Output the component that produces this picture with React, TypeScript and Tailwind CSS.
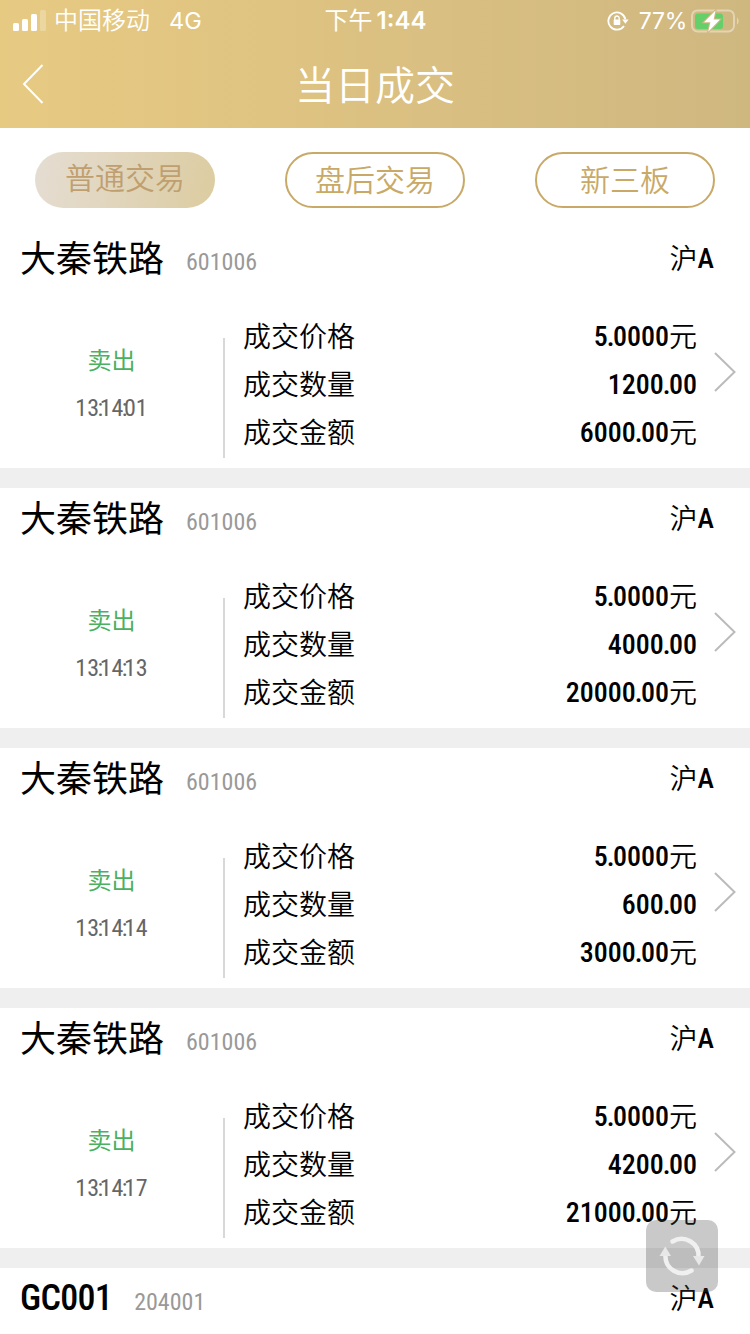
import React from 'react'
import clsx from 'clsx'

const trades = [
    { name: '大秦铁路', code: '601006', time: '13:14:01', price: '5.0000', count: '1200.00', amount: '6000.00' },
    { name: '大秦铁路', code: '601006', time: '13:14:13', price: '5.0000', count: '4000.00', amount: '20000.00' },
    { name: '大秦铁路', code: '601006', time: '13:14:14', price: '5.0000', count: '600.00', amount: '3000.00' },
    { name: '大秦铁路', code: '601006', time: '13:14:17', price: '5.0000', count: '4200.00', amount: '21000.00' },
]

const StatusBar = () => {
    return (
        <div className="h-10 pl-3 pr-[11px] grid grid-cols-3 items-center text-2xl leading-10 font-['Inter','Noto_Sans_CJK_SC',sans-serif]">
            <div className="flex items-center">
                <svg width="34" height="22" viewBox="0 0 34 22" fill="white">
                    <rect x="1" y="13" width="6" height="8" rx="1.5" />
                    <rect x="10" y="9" width="6" height="12" rx="1.5" />
                    <rect x="19" y="4" width="6" height="17" rx="1.5" />
                    <rect x="28" y="0" width="6" height="21" rx="1.5" opacity="0.25" />
                </svg>
                <span className="ml-2 pt-px font-[350]">中国移动</span>
                <span className="ml-[19px] pt-px text-[23.5px]">4G</span>
            </div>
            <div className="flex justify-center pt-px font-semibold">
                <span className="font-normal mr-1">下午</span>1:44
            </div>
            <div className="flex items-center justify-end">
                <svg width="22" height="22" viewBox="0 0 22 22" fill="none" stroke="white" strokeWidth="1.8">
                    <path d="M17 16a8.600 8.600 0 1 1 1.400-6.600" />
                    <path d="M15.2 9.400h6.400l-3.200 4.400z" fill="white" stroke="none" />
                    <path d="M7.8 10V8.2a2.2 2.2 0 0 1 4.4 0V10" strokeWidth="1.4" />
                    <rect x="6.7" y="9.6" width="6.6" height="5.4" rx="0.8" fill="white" stroke="none" />
                </svg>
                <span className="ml-2.5 pt-px text-[23px] tracking-[-0.3px]">77%</span>
                <svg className="ml-[3px]" width="49" height="24" viewBox="0 0 49 24">
                    <rect x="2" y="1.400" width="42" height="21" rx="5.5" fill="none" stroke="white" strokeOpacity="0.4" strokeWidth="2" />
                    <path d="M47 8.500c2.200 1.200 2.200 5.800 0 7z" fill="white" fillOpacity="0.4" />
                    <rect x="5" y="4.400" width="28" height="15.500" rx="3" fill="#65cf69" />
                    <path d="M25.5 1.5 14 13.2h6.4l-2.2 9.6L30 10.4h-6.4z" fill="white" stroke="#d2b983" strokeWidth="2" />
                    <path d="M25.5 1.5 14 13.2h6.4l-2.2 9.6L30 10.4h-6.4z" fill="white" />
                </svg>
            </div>
        </div>
    )
}

const Header = () => {
    return (
        <div className="h-32 bg-linear-to-r from-[#e7ca82] to-[#cfb780] text-white">
            <StatusBar />
            <div className="h-[88px] grid grid-cols-[1fr_auto_1fr] items-center">
                <svg className="ml-[22px]" width="22" height="40" viewBox="0 0 22 40" fill="none" stroke="white" strokeWidth="2">
                    <path d="M20.5 1 2 20l18.500 19" />
                </svg>
                <h1 className="pt-1.5 text-[40px] font-[350]">当日成交</h1>
            </div>
        </div>
    )
}

const Tab = ({ label, active }: { label: string; active?: boolean }) => {
    return (
        <button
            className={clsx(
                'w-[180px] h-14 rounded-full text-[30px] font-[350]',
                active
                    ? 'bg-linear-100 from-[#e5ddd3] to-[#dccca0] text-[#bf9f70] pb-1'
                    : 'border-2 border-[#c8a968] text-[#c8a968]'
            )}
        >
            {label}
        </button>
    )
}

// digits with tightened separators
const Num = ({ value }: { value: string }) => {
    return (
        <>
            {value.split(/([.:])/).map((part, i) =>
                part === ':' ? (
                    <span key={i} className="-mx-[1.5px] tracking-[-2px]">{part}</span>
                ) : part === '.' ? (
                    <span key={i} className="-mx-px tracking-[-0.5px]">{part}</span>
                ) : (
                    <span key={i}>{part}</span>
                )
            )}
        </>
    )
}

const Row = ({ label, value, unit }: { label: string; value: string; unit?: string }) => {
    return (
        <div className="flex justify-between h-12">
            <span className="pt-0.5 leading-[46px] font-[350]">{label}</span>
            <span className="flex">
                <span className="font-medium [font-stretch:85%]">
                    <Num value={value} />
                </span>
                {unit && <span className="pt-0.5 leading-[46px] font-[350]">{unit}</span>}
            </span>
        </div>
    )
}

const CardTitle = ({ name, code }: { name: string; code: string }) => {
    return (
        <div className="h-15 pl-5 pr-9 flex items-center justify-between">
            <div className="flex items-center leading-15 [font-stretch:85%]">
                {/^[A-Z]/.test(name) ? (
                    <span className="text-4xl leading-15 font-medium tracking-[-0.7px]">{name}</span>
                ) : (
                    <span className="pt-1 text-4xl leading-14 font-normal">{name}</span>
                )}
                <span className="ml-[22px] pt-2 text-2xl leading-[52px] font-normal text-[#999]">{code}</span>
            </div>
            <div className="flex text-[28px] leading-15 font-medium [font-stretch:85%]">
                <span className="pt-1 leading-14 font-[350]">沪</span>
                <span className="pt-px leading-[59px]">A</span>
            </div>
        </div>
    )
}

const TradeCard = ({ trade }: { trade: (typeof trades)[number] }) => {
    return (
        <div className="h-[260px] border-b-20 border-[#efefef] bg-white text-black">
            <CardTitle name={trade.name} code={trade.code} />
            <div className="flex h-[180px]">
                <div className="w-[223px] pt-12 text-2xl leading-12 text-center">
                    <div className="pt-0.5 leading-[46px] text-[#4bb05f]">卖出</div>
                    <div className="text-[#666] font-normal [font-stretch:85%]">
                        <Num value={trade.time} />
                    </div>
                </div>
                <div className="mt-[50px] w-0.5 h-[120px] bg-[#d8d8d8]" />
                <div className="flex-1 pl-[18px] pt-[25px] text-[28px] leading-12">
                    <Row label="成交价格" value={trade.price} unit="元" />
                    <Row label="成交数量" value={trade.count} />
                    <Row label="成交金额" value={trade.amount} unit="元" />
                </div>
                <svg className="mt-16 ml-[17px] mr-3.5" width="22" height="40" viewBox="0 0 22 40" fill="none" stroke="#bbb" strokeWidth="2">
                    <path d="M1 1l19.500 19L1 39" />
                </svg>
            </div>
        </div>
    )
}

const RefreshButton = () => {
    return (
        <button className="absolute left-[646px] top-[1220px] size-18 rounded-[10px] bg-[#444]/29">
            <svg width="72" height="72" viewBox="0 0 72 72" fill="none" stroke="#f0f0f0" strokeWidth="4.500" strokeLinecap="round">
                <path d="M26.500 21.500A17 17 0 0 1 52.500 37" />
                <path d="M45.500 50.500A17 17 0 0 1 19.500 35" />
                <path d="M47 36h11.500L53 45.500z" fill="#e8e8e8" stroke="none" />
                <path d="M13.500 36h11.500L19.300 26.500z" fill="#e8e8e8" stroke="none" />
            </svg>
        </button>
    )
}

const App = () => {
    return (
        <div className="relative w-[750px] h-[1334px] overflow-hidden bg-white font-['Roboto','Noto_Sans_CJK_SC',sans-serif]">
            <Header />
            <div className="h-[100px] px-[35px] pt-6 flex justify-between">
                <Tab label="普通交易" active />
                <Tab label="盘后交易" />
                <Tab label="新三板" />
            </div>
            {trades.map((trade, i) => (
                <TradeCard key={i} trade={trade} />
            ))}
            <CardTitle name="GC001" code="204001" />
            <RefreshButton />
        </div>
    )
}

export default App
